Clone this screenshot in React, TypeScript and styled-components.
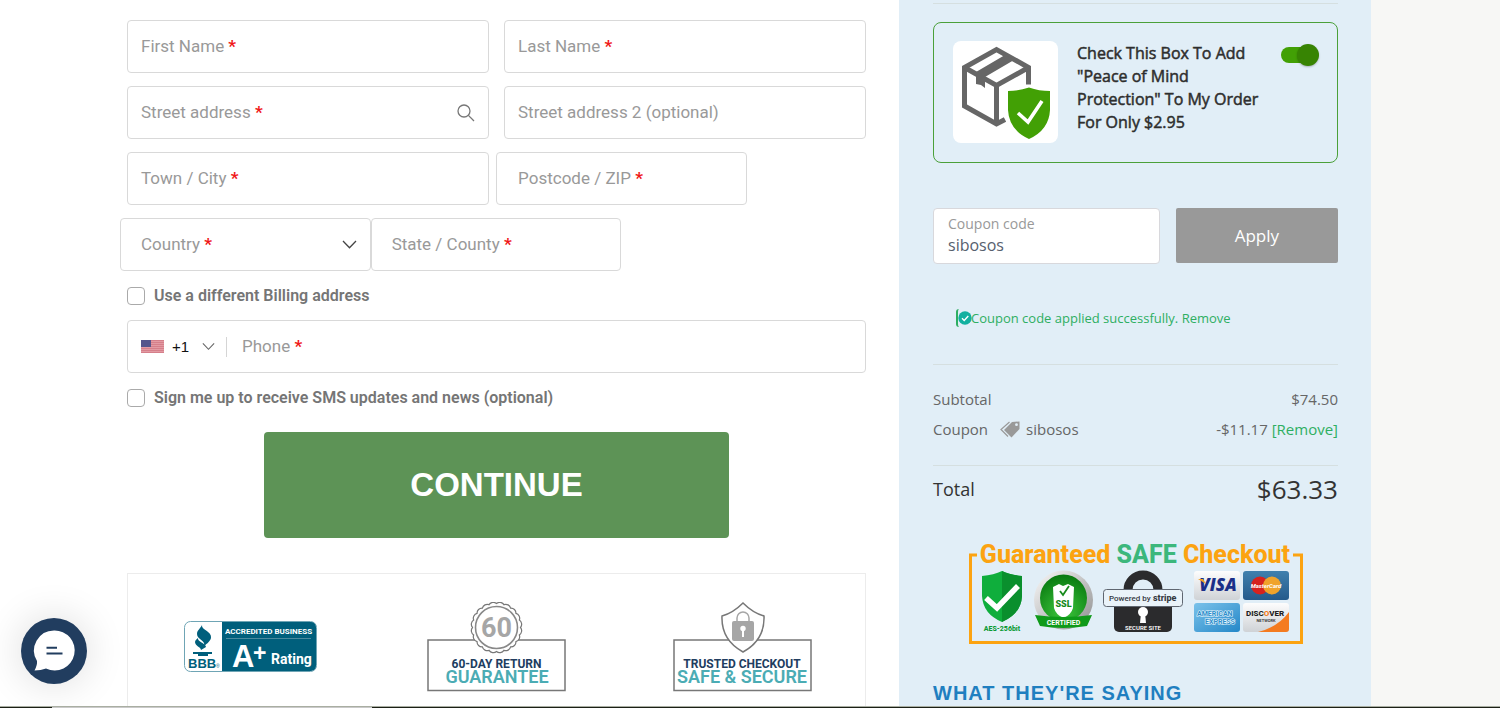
import React from "react";
import styled, { createGlobalStyle } from "styled-components";

const GlobalStyle = createGlobalStyle`
  *, *::before, *::after { box-sizing: border-box; }
  body { margin: 0; background: #f7f7f5; }
  button, input, select { font: inherit; margin: 0; }
`;

const Page = styled.div`
  display: grid;
  grid-template-columns: 899fr 472fr 129fr;
  min-height: 100vh;
  font-family: Roboto, sans-serif;
  font-size: 16px;
`;

const Main = styled.main`
  display: flex;
  flex-direction: column;
  background: #fff;
  padding: 20px 33px 0 127px;
`;

const Form = styled.form`
  display: flex;
  flex-direction: column;
`;

const Row = styled.div<{ $gap?: number; $outset?: boolean }>`
  display: flex;
  gap: ${(p) => p.$gap ?? 0}px;
  margin-left: ${(p) => (p.$outset ? -7 : 0)}px;
  margin-bottom: 13px;
`;

const FieldBox = styled.div<{ $basis?: string; $inset?: number }>`
  position: relative;
  display: flex;
  align-items: center;
  flex: ${(p) => (p.$basis ? `0 0 ${p.$basis}` : "1 1 0")};
  height: 53px;
  padding: 0 13px 0 ${(p) => p.$inset ?? 13}px;
  border: 1px solid #d9d9d9;
  border-radius: 4px;
  background: #fff;
  color: #777;
`;

const FloatLabel = styled.label<{ $left: number }>`
  position: absolute;
  left: ${(p) => p.$left}px;
  top: 15px;
  line-height: 20px;
  font-size: 17px;
  color: #999;
  pointer-events: none;
  white-space: nowrap;
`;

const Star = styled.span`
  color: #f01818;
  font-weight: 700;
`;

const TextInput = styled.input`
  flex: 1;
  min-width: 0;
  height: 100%;
  padding: 0;
  border: 0;
  outline: 0;
  background: transparent;
  color: #444;
`;

const PlainSelect = styled.select`
  flex: 1;
  height: 100%;
  padding: 0;
  border: 0;
  outline: 0;
  appearance: none;
  background: transparent;
  color: #444;
`;

const CheckRow = styled.div`
  display: flex;
  align-items: center;
  gap: 9px;
  height: 20px;
  margin: 2px 0 14px;
`;

const CheckBox = styled.input`
  appearance: none;
  width: 18px;
  height: 18px;
  border: 1px solid #aaa;
  border-radius: 4px;
  background: #fff;
  &:checked { background: #5d9356; }
`;

const CheckLabel = styled.label`
  font-size: 16px;
  line-height: 18px;
  font-weight: 600;
  color: #757575;
  padding-bottom: 1px;
`;

const DialCode = styled.div`
  display: flex;
  align-items: center;
  width: 86px;
  height: 20px;
  border-right: 1px solid #d5d5d5;
`;

const DialSelect = styled.select`
  width: 30px;
  margin-left: 8px;
  padding: 0;
  border: 0;
  outline: 0;
  appearance: none;
  background: transparent;
  color: #111;
  font-family: "Liberation Sans", sans-serif;
  font-size: 15px;
`;

const ContinueButton = styled.button`
  align-self: center;
  width: 63%;
  height: 106px;
  margin: 10px 0 35px;
  border: 0;
  border-radius: 4px;
  background: #5d9356;
  color: #fff;
  font-family: "Liberation Sans", Arial, sans-serif;
  font-size: 33px;
  font-weight: 700;
`;

const TrustPanel = styled.section`
  flex: 1;
  display: grid;
  grid-template-columns: repeat(3, 1fr);
  align-items: start;
  justify-items: center;
  padding-top: 28px;
  border: 1px solid #ececec;
  border-bottom: 0;
`;

const BadgeSvg = styled.svg<{ $top?: number }>`
  display: block;
  margin-top: ${(p) => p.$top ?? 0}px;
`;

const Sidebar = styled.aside`
  display: flex;
  flex-direction: column;
  padding: 3px 33px 0 34px;
  background: #e1eef7;
  font-family: "Open Sans", "Noto Sans", sans-serif;
`;

const Divider = styled.hr`
  width: 100%;
  height: 1px;
  margin: 0;
  border: 0;
  background: #d5dfe0;
`;

const ProtectionCard = styled.section`
  display: flex;
  align-items: flex-start;
  margin-top: 18px;
  padding: 18px 18px 19px 19px;
  border: 1px solid #4ba03a;
  border-radius: 8px;
`;

const ProtectionLabel = styled.label`
  flex: 1;
  margin: 1px 20px 0 19px;
  font-size: 16px;
  line-height: 23px;
  color: #2e2e2e;
  -webkit-text-stroke: 0.5px #2e2e2e;
`;

const Toggle = styled.input`
  appearance: none;
  position: relative;
  width: 38px;
  height: 22px;
  margin-top: 3px;
  &::before {
    content: "";
    position: absolute;
    left: 0;
    top: 3px;
    width: 35px;
    height: 16px;
    border-radius: 8px;
    background: #42a005;
  }
  &::after {
    content: "";
    position: absolute;
    right: 0;
    top: 0;
    width: 22px;
    height: 22px;
    border-radius: 50%;
    background: #378403;
    box-shadow: 0 1px 2px rgba(0, 0, 0, 0.25);
  }
`;

const CouponForm = styled.form`
  display: flex;
  gap: 16px;
  margin-top: 45px;
`;

const CouponField = styled.div`
  flex: 0 0 56%;
  display: flex;
  flex-direction: column;
  height: 56px;
  padding: 5px 14px;
  border: 1px solid #d8d8dc;
  border-radius: 4px;
  background: #fff;
`;

const CouponLabel = styled.label`
  font-size: 14px;
  line-height: 19px;
  color: #999;
`;

const CouponInput = styled.input`
  width: 100%;
  height: 24px;
  padding: 0;
  border: 0;
  outline: 0;
  font-size: 16px;
  color: #56606e;
`;

const ApplyButton = styled.button`
  flex: 1;
  height: 55px;
  border: 0;
  border-radius: 2px;
  background: #999;
  color: #fff;
  font-size: 17px;
`;

const SuccessNote = styled.p`
  display: flex;
  align-items: center;
  height: 18px;
  margin: 45px 0 37px 23px;
  border-left: 2px solid #2eae62;
  border-radius: 3px;
  font-size: 13px;
  color: #2eae62;
`;

const Link = styled.a`
  color: #2eae62;
  text-decoration: none;
`;

const Totals = styled.div`
  display: flex;
  flex-direction: column;
  padding: 19px 0 21px;
`;

const Line = styled.div`
  display: flex;
  align-items: center;
  justify-content: space-between;
  height: 30px;
  font-size: 15px;
  color: #666;
`;

const CouponName = styled.span`
  display: flex;
  align-items: center;
  svg { margin: 0 6px 0 12px; }
`;

const TotalLine = styled(Line)`
  height: 45px;
  font-size: 18px;
  color: #333;
`;

const TotalAmount = styled.span`
  font-size: 26px;
`;

const SealArea = styled.div`
  display: flex;
  justify-content: center;
  margin-top: 30px;
`;

const Heading = styled.h2`
  margin: 36px 0 0;
  font-family: "Liberation Sans", Arial, sans-serif;
  font-size: 20px;
  line-height: 27px;
  font-weight: 700;
  letter-spacing: 1px;
  color: #1f7fc0;
`;

const ChatButton = styled.button`
  position: fixed;
  left: 21px;
  bottom: 24px;
  width: 66px;
  height: 66px;
  padding: 0;
  border: 0;
  border-radius: 50%;
  background: #213d5f;
  box-shadow: 0 0 40px rgba(0, 0, 0, 0.14);
`;

const BottomStrip = styled.div`
  position: fixed;
  inset: auto 0 0 0;
  height: 2px;
  border-top: 1px solid #a9aea2;
  background: linear-gradient(90deg, #1c2016 52px, #cacaca 52px, #cacaca 372px, #1c2016 372px);
`;

type FieldProps = {
  id: string;
  label: string;
  required?: boolean;
  basis?: string;
  inset?: number;
  children?: React.ReactNode;
};

function Field({ id, label, required, basis, inset = 13, children }: FieldProps) {
  return (
    <FieldBox $basis={basis} $inset={inset}>
      <TextInput id={id} type="text" />
      <FloatLabel htmlFor={id} $left={inset}>
        {label} {required && <Star>*</Star>}
      </FloatLabel>
      {children}
    </FieldBox>
  );
}

const SearchIcon = () => (
  <svg width="18" height="18" viewBox="0 0 18 18" fill="none" stroke="#777" strokeWidth="1.3">
    <circle cx="7" cy="7" r="6" />
    <path d="M11.4 11.4 17 17" />
  </svg>
);

const Chevron = ({ width = 15, color = "#444" }) => (
  <svg width={width} height="9" viewBox="0 0 15 9" fill="none" stroke={color} strokeWidth="1.3">
    <path d="M1 1 7.5 7.7 14 1" />
  </svg>
);

const Flag = () => (
  <svg width="23" height="13" viewBox="0 0 23 13">
    <rect width="23" height="13" fill="#e39aa3" />
    <path d="M0 .5H23M0 2.5H23M0 4.5H23M0 6.5H23M0 8.5H23M0 10.5H23M0 12.5H23" stroke="#d57f8a" strokeWidth="1" />
    <rect width="10" height="7" fill="#55558c" />
  </svg>
);

const BoxShield = () => (
  <svg width="105" height="102" viewBox="0 0 105 102">
    <rect width="105" height="102" rx="8" fill="#fff" />
    <g fill="none" stroke="#666" strokeWidth="5">
      <path d="M52 78.5 43.5 83 11.5 65V26.5L43.5 8.5 75.5 26.5V43.5" />
      <path d="M11.5 26.5 43.5 44.5 75.5 26.5M43.5 44.5V83" />
    </g>
    <path d="M52 14 61 19 32 36V47L28 44 23 43V31Z" fill="#666" />
    <path d="M55 50Q66 50 76 46.5 86 50 97 50V69Q96 89 76 98 56 89 55 69Z" fill="#42a005" />
    <path d="M65 72 75 81 89 60" fill="none" stroke="#fff" strokeWidth="3.6" />
  </svg>
);

const CheckDot = () => (
  <svg width="13" height="14" viewBox="0 0 13 14" overflow="visible">
    <circle cx="7" cy="7" r="6.7" fill="#12b0a0" />
    <path d="M4 7.3 6.2 9.4 10.3 5" fill="none" stroke="#fff" strokeWidth="1.4" />
  </svg>
);

const Tags = () => (
  <svg width="20" height="17" viewBox="0 0 20 17">
    <path d="M9.5 1 1 8.5 8 15.5" fill="none" stroke="#999" strokeWidth="1.2" />
    <path d="M12 1 19.5 .5V8L11.5 16.5 4 9Z" fill="#999" />
    <circle cx="16.5" cy="3.7" r="1.4" fill="#e1eef7" />
  </svg>
);

const BbbBadge = () => (
  <BadgeSvg $top={19} width="133" height="51" viewBox="0 0 133 51" role="img">
    <rect x=".5" y=".5" width="132" height="50" rx="6" fill="#fff" stroke="#6fa5b5" />
    <path d="M38 1H127a5 5 0 0 1 5 5V45a5 5 0 0 1-5 5H38Z" fill="#005f7c" />
    <path d="M42 17.5H127" stroke="#5d95a8" strokeWidth=".8" />
    <g fill="#005f7c">
      <path d="M18 4C17 9 28 10 27 17 26 21 21 24 20 25 22 19 13 19 13 13 13 9 17 7 18 4Z" />
      <path d="M14 17C13 21 22 22 22 26L17 29C17 26 11 25 11 21 11 19 13 18 14 17Z" />
      <path d="M9 31H28V33H24V35H14V33H9Z" />
      <text x="4" y="47" fontFamily="Liberation Sans, sans-serif" fontWeight="700" fontSize="13">BBB</text>
      <text x="32" y="47" fontFamily="Liberation Sans, sans-serif" fontSize="5">®</text>
    </g>
    <g fill="#fff" fontWeight="700">
      <text x="41" y="13" fontFamily="Roboto, sans-serif" fontSize="8">ACCREDITED BUSINESS</text>
      <text x="48" y="45.5" fontFamily="Liberation Sans, sans-serif" fontSize="31">A</text>
      <text x="69" y="40" fontFamily="Liberation Sans, sans-serif" fontSize="23">+</text>
      <text x="87" y="43" fontFamily="Roboto, sans-serif" fontSize="14">Rating</text>
    </g>
  </BadgeSvg>
);

// Scalloped outline of the award rosette: small arcs round a circle.
const scallop = (cx: number, cy: number, r: number, n: number) => {
  const at = (i: number) => {
    const a = (i / n) * Math.PI * 2;
    return `${(cx + r * Math.cos(a)).toFixed(2)} ${(cy + r * Math.sin(a)).toFixed(2)}`;
  };
  return `M${at(0)}` + Array.from({ length: n }, (_, i) => `A5 5 0 0 1 ${at(i + 1)}`).join("") + "Z";
};

const ReturnBadge = () => (
  <BadgeSvg width="139" height="90" viewBox="0 0 139 90" role="img">
    <rect x="1" y="38" width="137" height="50.5" fill="#fff" stroke="#777" strokeWidth="1.5" />
    <path d={scallop(69.5, 25.5, 24, 20)} fill="#fff" stroke="#777" strokeWidth="1.2" />
    <circle cx="69.5" cy="25.5" r="21" fill="#fff" stroke="#888" strokeWidth="1.6" />
    <g textAnchor="middle" fontFamily="Roboto, sans-serif" fontWeight="700">
      <text x="69.5" y="35" fontSize="27" fill="#a6a6a6">60</text>
      <text x="69.5" y="66" fontSize="12" fill="#213d5f">60-DAY RETURN</text>
      <text x="70" y="81" fontSize="18" fontWeight="600" fill="#4bacb4">GUARANTEE</text>
    </g>
  </BadgeSvg>
);

const SecureBadge = () => (
  <BadgeSvg width="139" height="90" viewBox="0 0 139 90" role="img">
    <rect x="1" y="38" width="137" height="50.5" fill="#fff" stroke="#777" strokeWidth="1.5" />
    <path d="M70 1Q80 11 91 14 92 38 70 50 48 38 49 14 60 11 70 1Z" fill="#fff" stroke="#777" strokeWidth="1.5" />
    <path d="M64 20V16a6 6 0 0 1 12 0V20" fill="none" stroke="#a6a6a6" strokeWidth="1.5" />
    <rect x="59" y="19" width="22" height="20" rx="2" fill="#a6a6a6" />
    <circle cx="70" cy="26.5" r="2.7" fill="#fff" />
    <path d="M69 27H71V35H69Z" fill="#fff" />
    <g textAnchor="middle" fontFamily="Roboto, sans-serif" fontWeight="700">
      <text x="69" y="66" fontSize="12" fill="#213d5f">TRUSTED CHECKOUT</text>
      <text x="69" y="81" fontSize="18" fontWeight="600" fill="#4bacb4">SAFE &amp; SECURE</text>
    </g>
  </BadgeSvg>
);

const SafeCheckout = () => (
  <svg width="334" height="103" viewBox="0 0 334 103" role="img" fontFamily="Roboto, sans-serif">
    <defs>
      <linearGradient id="silver" x1="0" y1="0" x2="1" y2="1">
        <stop offset="0" stopColor="#fafafa" />
        <stop offset="1" stopColor="#8e8e8e" />
      </linearGradient>
      <radialGradient id="green" cx=".5" cy=".8" r=".8">
        <stop offset="0" stopColor="#3dc63d" />
        <stop offset="1" stopColor="#08780f" />
      </radialGradient>
      <linearGradient id="card" x1="0" y1="0" x2="0" y2="1">
        <stop offset="0" stopColor="#fdfdfd" />
        <stop offset="1" stopColor="#cfd2d6" />
      </linearGradient>
      <linearGradient id="mc" x1="0" y1="0" x2="0" y2="1">
        <stop offset="0" stopColor="#3f80ae" />
        <stop offset="1" stopColor="#245a8b" />
      </linearGradient>
      <linearGradient id="amex" x1="0" y1="0" x2="1" y2="1">
        <stop offset="0" stopColor="#7ac2ea" />
        <stop offset="1" stopColor="#2487c8" />
      </linearGradient>
    </defs>
    <path d="M8 14H1.5V101.5H332.5V14H324" fill="none" stroke="#fca311" strokeWidth="3" />
    <text x="166" y="22" textAnchor="middle" fontSize="25" fontWeight="800" fill="#fca311">
      Guaranteed <tspan fill="#3cb77c">SAFE</tspan> Checkout
    </text>

    <path d="M13 35Q25 34 33 30 41 34 53 35V55Q52 73 33 81 14 73 13 55Z" fill="#0fae3c" />
    <path d="M33 30Q41 34 53 35V55Q52 73 33 81Z" fill="#0a8f2d" />
    <path d="M17 57 28 67 49 45" fill="none" stroke="#fff" strokeWidth="5.5" />
    <text x="33" y="90" textAnchor="middle" fontSize="7" fontWeight="800" fill="#0c9a34">AES-256bit</text>

    <circle cx="94.5" cy="59" r="29.5" fill="url(#silver)" />
    <circle cx="94.5" cy="57" r="23.5" fill="url(#green)" />
    <path d="M84 46 90 43 94 45 99 43 105 46 104 67Q102 74 94.5 77 87 74 85 67Z" fill="#fff" />
    <path d="M91 50 94 54 100 45" fill="none" stroke="#178a1c" strokeWidth="1.8" />
    <text x="94.5" y="66" textAnchor="middle" fontSize="9" fontWeight="900" fill="#178a1c">SSL</text>
    <path d="M66 74Q94 78 123 74L118 85Q94 89 71 85Z" fill="#0f9a19" />
    <text x="94.5" y="84" textAnchor="middle" fontSize="7" fontWeight="700" fill="#fff">CERTIFIED</text>

    <path d="M159 50V49a15 15 0 0 1 30 0V50" fill="none" stroke="#2b2b2d" strokeWidth="9" />
    <path d="M145 62H203V86a5 5 0 0 1-5 5H150a5 5 0 0 1-5-5Z" fill="#2b2b2d" />
    <rect x="134.5" y="48.5" width="79" height="17" rx="3" fill="#eaf3f9" stroke="#5f6670" />
    <text x="140" y="60" fontSize="8" fontWeight="500" fill="#34383f">Powered by</text>
    <text x="184" y="60" fontSize="9" fontWeight="800" fill="#34383f">stripe</text>
    <circle cx="174" cy="71" r="5" fill="#fff" />
    <path d="M172 72H176L177 82H171Z" fill="#fff" />
    <text x="174" y="89" textAnchor="middle" fontSize="6" fontWeight="600" fill="#fff">SECURE SITE</text>

    <rect x="225" y="30" width="46" height="29" rx="3" fill="url(#card)" />
    <text x="249" y="50" textAnchor="middle" fontFamily="Open Sans, sans-serif" fontSize="17" fontStyle="italic" fontWeight="800" fill="#1b2f88">VISA</text>
    <path d="M229 38H234L237 43Z" fill="#f0a124" />
    <rect x="274" y="30" width="46" height="29" rx="3" fill="url(#mc)" />
    <circle cx="291" cy="44.5" r="9" fill="#d6221e" />
    <circle cx="303" cy="44.5" r="9" fill="#f0a32b" />
    <text x="297" y="47" textAnchor="middle" fontSize="6" fontStyle="italic" fontWeight="700" fill="#fff">MasterCard</text>
    <rect x="225" y="62" width="46" height="29" rx="3" fill="url(#amex)" />
    <g fontSize="7" fontWeight="700" fill="#2d8ecb" stroke="#e6f5fc" strokeWidth="1.2" paintOrder="stroke">
      <text x="228" y="75">AMERICAN</text>
      <text x="236" y="83">EXPRESS</text>
    </g>
    <rect x="274" y="62" width="46" height="29" rx="3" fill="url(#card)" />
    <path d="M320 71V88a3 3 0 0 1-3 3H289Q309 86 320 71Z" fill="#f47b20" />
    <text x="277" y="75" fontSize="8" fontWeight="800" fill="#222">DISC<tspan fill="#f47b20">O</tspan>VER</text>
    <text x="297" y="81" textAnchor="middle" fontSize="4" fontWeight="600" fill="#333">NETWORK</text>
  </svg>
);

const ChatIcon = () => (
  <svg width="66" height="66" viewBox="0 0 66 66">
    <path d="M33 12.5A20 20 0 1 1 25 50.5Q20 52.5 13.5 52.5 16.5 47 16 43A20 20 0 0 1 33 12.5Z" fill="#fff" />
    <path d="M25.5 29.8H36M25.5 35.5H41.5" stroke="#213d5f" strokeWidth="2" />
  </svg>
);

export default function App() {
  return (
    <>
      <GlobalStyle />
      <Page>
        <Main>
          <Form>
            <Row $gap={15}>
              <Field id="first" label="First Name" required />
              <Field id="last" label="Last Name" required />
            </Row>
            <Row $gap={15}>
              <Field id="street" label="Street address" required>
                <SearchIcon />
              </Field>
              <Field id="street2" label="Street address 2 (optional)" />
            </Row>
            <Row $gap={7}>
              <Field id="city" label="Town / City" required basis="49%" />
              <Field id="zip" label="Postcode / ZIP" required basis="34%" inset={21} />
            </Row>
            <Row $outset>
              <FieldBox $basis="33.6%" $inset={20}>
                <PlainSelect id="country" defaultValue="">
                  <option value="" />
                </PlainSelect>
                <FloatLabel htmlFor="country" $left={20}>
                  Country <Star>*</Star>
                </FloatLabel>
                <Chevron />
              </FieldBox>
              <Field id="state" label="State / County" required basis="33.6%" inset={20} />
            </Row>
            <CheckRow>
              <CheckBox id="billing" type="checkbox" />
              <CheckLabel htmlFor="billing">Use a different Billing address</CheckLabel>
            </CheckRow>
            <Row>
              <FieldBox>
                <DialCode>
                  <Flag />
                  <DialSelect aria-label="Dial code">
                    <option>+1</option>
                  </DialSelect>
                  <Chevron width={13} color="#666" />
                </DialCode>
                <TextInput id="phone" type="tel" />
                <FloatLabel htmlFor="phone" $left={114}>
                  Phone <Star>*</Star>
                </FloatLabel>
              </FieldBox>
            </Row>
            <CheckRow>
              <CheckBox id="sms" type="checkbox" />
              <CheckLabel htmlFor="sms">Sign me up to receive SMS updates and news (optional)</CheckLabel>
            </CheckRow>
            <ContinueButton type="button">CONTINUE</ContinueButton>
          </Form>
          <TrustPanel>
            <BbbBadge />
            <ReturnBadge />
            <SecureBadge />
          </TrustPanel>
        </Main>
        <Sidebar>
          <Divider />
          <ProtectionCard>
            <BoxShield />
            <ProtectionLabel htmlFor="protection">
              Check This Box To Add "Peace of Mind Protection" To My Order For Only $2.95
            </ProtectionLabel>
            <Toggle id="protection" type="checkbox" role="switch" defaultChecked />
          </ProtectionCard>
          <CouponForm>
            <CouponField>
              <CouponLabel htmlFor="coupon">Coupon code</CouponLabel>
              <CouponInput id="coupon" type="text" defaultValue="sibosos" />
            </CouponField>
            <ApplyButton type="button">Apply</ApplyButton>
          </CouponForm>
          <SuccessNote>
            <CheckDot />
            <span>
              Coupon code applied successfully. <Link href="#remove">Remove</Link>
            </span>
          </SuccessNote>
          <Divider />
          <Totals>
            <Line>
              <span>Subtotal</span>
              <span>$74.50</span>
            </Line>
            <Line>
              <CouponName>
                Coupon
                <Tags />
                sibosos
              </CouponName>
              <span>
                -$11.17 <Link href="#remove">[Remove]</Link>
              </span>
            </Line>
          </Totals>
          <Divider />
          <TotalLine>
            <span>Total</span>
            <TotalAmount>$63.33</TotalAmount>
          </TotalLine>
          <SealArea>
            <SafeCheckout />
          </SealArea>
          <Heading>WHAT THEY'RE SAYING</Heading>
        </Sidebar>
      </Page>
      <ChatButton type="button" aria-label="Open chat">
        <ChatIcon />
      </ChatButton>
      <BottomStrip />
    </>
  );
}
